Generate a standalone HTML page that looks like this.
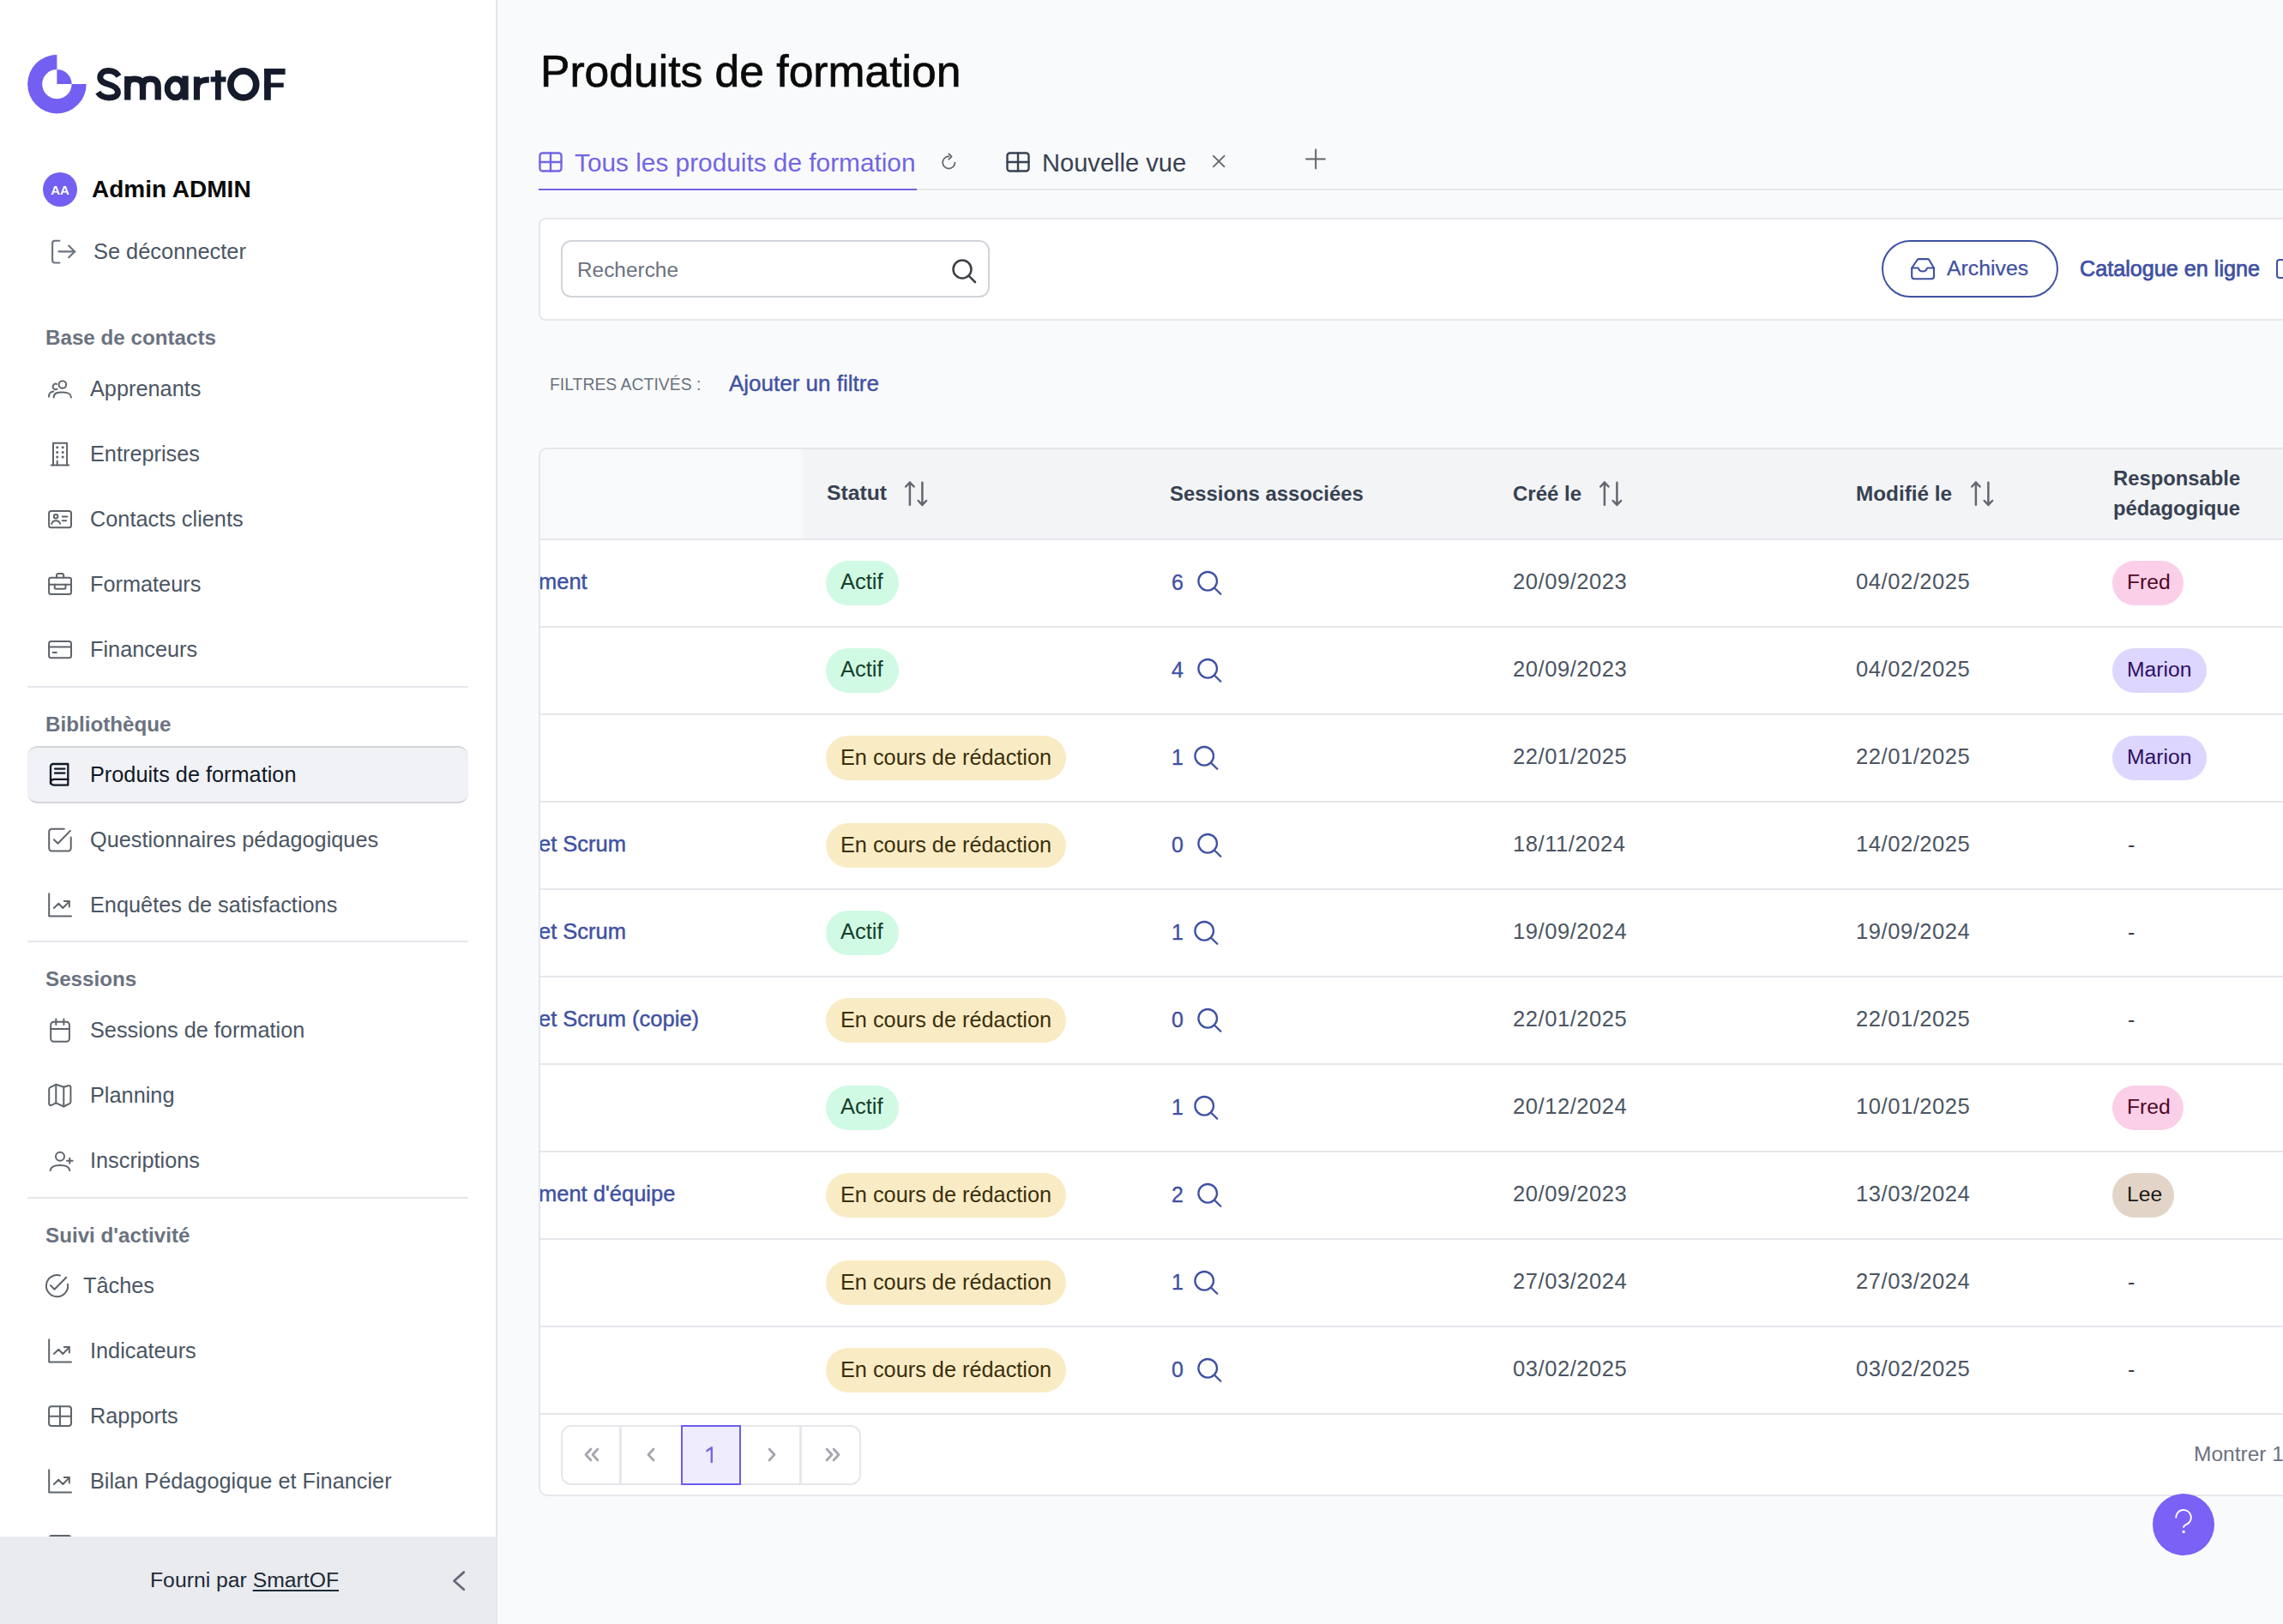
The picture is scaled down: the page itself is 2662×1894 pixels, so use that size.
<!DOCTYPE html>
<html><head><meta charset="utf-8"><title>Produits de formation</title>
<style>
html,body{margin:0;padding:0;}
body{width:2662px;height:1894px;position:relative;overflow:hidden;background:#f9fafb;font-family:"Liberation Sans",sans-serif;}
.t{position:absolute;white-space:nowrap;line-height:1;}
.r{position:absolute;}
svg.r{overflow:visible;}
</style></head><body>
<div class="r" style="left:0px;top:0px;width:578px;height:1894px;background:#fff;"></div>
<div class="r" style="left:578px;top:0px;width:2px;height:1894px;background:#e5e7eb;"></div>
<svg class="r" style="left:32px;top:64px;" width="69" height="69" viewBox="0 0 69 69" fill="#7360f2" stroke="none" stroke-width="0" stroke-linecap="round" stroke-linejoin="round"><path d="M34.4,-0.19999999999999574 A34.3,34.3 0 1 0 68.69999999999999,34.1 L51.599999999999994,34.1 A17.2,17.2 0 1 1 34.4,16.900000000000002 Z" /><path d="M34.4,34.1 L34.4,16.900000000000002 A17.2,17.2 0 0 1 51.599999999999994,34.1 Z" /></svg>
<svg class="r" style="left:0;top:0" width="580" height="160" viewBox="0 0 580 160"><g fill="none" stroke="#151b2b" stroke-linecap="butt"><path stroke-width="7" d="M138.6,88.8 C136,84.8 132,82.5 126.5,82.5 C120,82.5 116.8,86 116.8,90.3 C116.8,95 121,96.8 127,98.5 C133.5,100.3 137.4,102.5 137.4,107.8 C137.4,112 133,113.9 126.8,113.9 C121,113.9 116.8,111.5 114.2,107.6" /><path stroke-width="7.3" d="M148.75,116.6 V89" /><path stroke-width="7.3" d="M148.75,101 C148.75,94.5 151.5,92.2 156.5,92.2 C162.5,92.2 166.5,94.5 166.5,101.5 V116.6" /><path stroke-width="7.3" d="M166.5,101.5 C166.5,94.5 170,92.2 175,92.2 C181,92.2 184.2,94.5 184.2,101.5 V116.6" /><ellipse stroke-width="7" cx="204.6" cy="102.9" rx="9.4" ry="10.9" /><path stroke-width="7.3" d="M216,88.5 V116.6" /><path stroke-width="7.1" d="M229.45,116.6 V89.5" /><path stroke-width="6.8" d="M229.45,104 C229.6,96 234,93 243.8,93" /><path stroke-width="6.8" d="M254.3,82.1 V116.6" /><path stroke-width="6.1" d="M245.6,92.55 H263.5" /><ellipse stroke-width="7.7" cx="283.8" cy="98.45" rx="14.9" ry="15.5" /></g><g fill="#151b2b"><rect x="308.1" y="80" width="7.7" height="36.8"/><rect x="308.1" y="80" width="24.5" height="6.9"/><rect x="308.1" y="96.6" width="22.6" height="5.3"/></g></svg>
<div class="r" style="left:50px;top:201px;width:40px;height:40px;background:#7360f2;border-radius:50%;"></div>
<div class="t" style="left:50px;top:214.30px;font-size:15px;color:#fff;font-weight:700;width:40px;text-align:center;">AA</div>
<div class="t" style="left:107px;top:207.30px;font-size:28px;color:#0a0a0a;font-weight:700;">Admin ADMIN</div>
<svg class="r" style="left:50px;top:270px;" width="50" height="50" viewBox="0 0 50 50" fill="none" stroke="#6b7280" stroke-width="2.1" stroke-linecap="round" stroke-linejoin="round"><path d="M19.4,10.8 H14.1 a3,3 0 0 0 -3,3 V33.5 a3,3 0 0 0 3,3 H19.4" /><path d="M18.5,23.4 H37.3" /><path d="M30.2,16.6 L37,23.4 L30.2,30.2" /></svg>
<div class="t" style="left:109px;top:280.50px;font-size:25.4px;color:#4b5563;">Se déconnecter</div>
<div class="t" style="left:53px;top:381.51px;font-size:24.2px;color:#6b7280;font-weight:700;">Base de contacts</div>
<div class="t" style="left:105px;top:440.58px;font-size:25.3px;color:#4b5563;">Apprenants</div>
<div class="t" style="left:105px;top:516.58px;font-size:25.3px;color:#4b5563;">Entreprises</div>
<div class="t" style="left:105px;top:592.58px;font-size:25.3px;color:#4b5563;">Contacts clients</div>
<div class="t" style="left:105px;top:668.58px;font-size:25.3px;color:#4b5563;">Formateurs</div>
<div class="t" style="left:105px;top:744.58px;font-size:25.3px;color:#4b5563;">Financeurs</div>
<div class="r" style="left:32px;top:800px;width:514px;height:2px;background:#e5e7eb;"></div>
<div class="t" style="left:53px;top:832.51px;font-size:24.2px;color:#6b7280;font-weight:700;">Bibliothèque</div>
<div class="r" style="left:32px;top:870px;width:514px;height:67px;background:#f1f2f6;border-radius:12px;border-top:2px solid #d4d6db;border-bottom:2px solid #d4d6db;box-sizing:border-box;"></div>
<div class="t" style="left:105px;top:890.58px;font-size:25.3px;color:#111827;">Produits de formation</div>
<div class="t" style="left:105px;top:966.58px;font-size:25.3px;color:#4b5563;">Questionnaires pédagogiques</div>
<div class="t" style="left:105px;top:1042.58px;font-size:25.3px;color:#4b5563;">Enquêtes de satisfactions</div>
<div class="r" style="left:32px;top:1097px;width:514px;height:2px;background:#e5e7eb;"></div>
<div class="t" style="left:53px;top:1129.51px;font-size:24.2px;color:#6b7280;font-weight:700;">Sessions</div>
<div class="t" style="left:105px;top:1188.58px;font-size:25.3px;color:#4b5563;">Sessions de formation</div>
<div class="t" style="left:105px;top:1264.58px;font-size:25.3px;color:#4b5563;">Planning</div>
<div class="t" style="left:105px;top:1340.58px;font-size:25.3px;color:#4b5563;">Inscriptions</div>
<div class="r" style="left:32px;top:1396px;width:514px;height:2px;background:#e5e7eb;"></div>
<div class="t" style="left:53px;top:1428.51px;font-size:24.2px;color:#6b7280;font-weight:700;">Suivi d'activité</div>
<div class="t" style="left:97px;top:1486.58px;font-size:25.3px;color:#4b5563;">Tâches</div>
<div class="t" style="left:105px;top:1562.58px;font-size:25.3px;color:#4b5563;">Indicateurs</div>
<div class="t" style="left:105px;top:1638.58px;font-size:25.3px;color:#4b5563;">Rapports</div>
<div class="t" style="left:105px;top:1714.58px;font-size:25.3px;color:#4b5563;">Bilan Pédagogique et Financier</div>
<div class="t" style="left:105px;top:1790.58px;font-size:25.3px;color:#4b5563;">Documents</div>
<svg class="r" style="left:48px;top:436px;" width="44" height="44" viewBox="0 0 44 44" fill="none" stroke="#5f646b" stroke-width="2" stroke-linecap="round" stroke-linejoin="round"><circle cx="24.9" cy="12.5" r="4.3" /><path d="M18.2,11.9 A3.3,3.3 0 1 0 18.6,17.7" /><path d="M14.6,27.5 C15,22.3 18.5,21.4 24.6,21.4 C30.5,21.4 34.6,22.3 35,27.5" /><path d="M9,26.6 C9.3,22.3 10.8,21 14.3,20.6" /></svg>
<svg class="r" style="left:48px;top:508px;" width="44" height="44" viewBox="0 0 44 44" fill="none" stroke="#5f646b" stroke-width="2" stroke-linecap="round" stroke-linejoin="round"><path d="M14,34.5 V8.8 H30.1 V34.5" /><path d="M11.7,34.5 H32.2" /><path d="M18.7,29.7 V34.5" /><g fill="#5f646b" stroke="none"><circle cx="18.7" cy="13.7" r="1.5"/><circle cx="25.2" cy="13.7" r="1.5"/><circle cx="18.7" cy="19.4" r="1.5"/><circle cx="25.2" cy="19.4" r="1.5"/><circle cx="18.7" cy="24.9" r="1.5"/><circle cx="25.2" cy="24.9" r="1.5"/></g></svg>
<svg class="r" style="left:48px;top:584px;" width="44" height="44" viewBox="0 0 44 44" fill="none" stroke="#5f646b" stroke-width="2" stroke-linecap="round" stroke-linejoin="round"><rect x="9.1" y="11.9" width="25.9" height="19.3" rx="2.5" /><circle cx="17.1" cy="18.2" r="2.3" /><path d="M12.2,27 C13,24.3 15,23.3 17.2,23.3 C19.4,23.3 21.4,24.3 22.1,26.8" /><path d="M24.8,18.4 H30.4 M24.8,23.3 H29.1" /></svg>
<svg class="r" style="left:48px;top:660px;" width="44" height="44" viewBox="0 0 44 44" fill="none" stroke="#5f646b" stroke-width="2" stroke-linecap="round" stroke-linejoin="round"><rect x="9.1" y="13.8" width="25.9" height="19.1" rx="2.2" /><path d="M18,13.8 V10.9 a2,2 0 0 1 2,-2 H24.2 a2,2 0 0 1 2,2 V13.8" /><path d="M9.1,21.7 H35" /><path d="M15.7,21.7 V25.2 a1.5,1.5 0 0 0 1.5,1.5 H27 a1.5,1.5 0 0 0 1.5,-1.5 V21.7" /></svg>
<svg class="r" style="left:48px;top:736px;" width="44" height="44" viewBox="0 0 44 44" fill="none" stroke="#5f646b" stroke-width="2" stroke-linecap="round" stroke-linejoin="round"><rect x="9.1" y="11.9" width="25.9" height="19.3" rx="2.5" /><path d="M9.1,18.4 H35" /><path d="M13.7,24.9 H17.8" /></svg>
<svg class="r" style="left:48px;top:964px;" width="44" height="44" viewBox="0 0 44 44" fill="none" stroke="#5f646b" stroke-width="2" stroke-linecap="round" stroke-linejoin="round"><path d="M26.8,2.8 H12.4 a3.2,3.2 0 0 0 -3.2,3.2 V25.3 a3.2,3.2 0 0 0 3.2,3.2 H31.5 a3.2,3.2 0 0 0 3.2,-3.2 V12.5" /><path d="M14.9,15.2 L19.5,19.8 L33.9,4.9" /></svg>
<svg class="r" style="left:48px;top:1040px;" width="44" height="44" viewBox="0 0 44 44" fill="none" stroke="#5f646b" stroke-width="2" stroke-linecap="round" stroke-linejoin="round"><path d="M9.2,2.3 V28.5 H35" /><path d="M14.9,19 L20.3,13.8 L25.3,19 L32.8,11.4" /><path d="M26.8,11.1 H32.8 V17.6" /></svg>
<svg class="r" style="left:48px;top:1186px;" width="44" height="44" viewBox="0 0 44 44" fill="none" stroke="#5f646b" stroke-width="2" stroke-linecap="round" stroke-linejoin="round"><rect x="11.2" y="5.8" width="21.7" height="22.9" rx="3.5" /><path d="M11.2,14 H32.9" /><path d="M17.3,2.6 V8.9 M26.4,2.6 V8.9" /></svg>
<svg class="r" style="left:48px;top:1262px;" width="44" height="44" viewBox="0 0 44 44" fill="none" stroke="#5f646b" stroke-width="2" stroke-linecap="round" stroke-linejoin="round"><path d="M17.3,2.8 L10.6,6.2 a2.5,2.5 0 0 0 -1.4,2.2 V25.1 a2,2 0 0 0 2.9,1.8 L17.3,24.4 L26.3,28.5 L33,25.1 a2.5,2.5 0 0 0 1.4,-2.2 V6 a2,2 0 0 0 -2.9,-1.8 L26.3,5.8 Z" /><path d="M17.3,2.8 V24.4 M26.3,5.8 V28.5" /></svg>
<svg class="r" style="left:48px;top:1338px;" width="44" height="44" viewBox="0 0 44 44" fill="none" stroke="#5f646b" stroke-width="2" stroke-linecap="round" stroke-linejoin="round"><circle cx="22" cy="10.8" r="5" /><path d="M10.6,27.1 C11.2,22.5 14.5,20.9 22,20.9 C29.5,20.9 32.8,22.5 33.3,27.1" /><path d="M33.3,12.7 V18.7 M30,15.7 H36.6" /></svg>
<svg class="r" style="left:48px;top:1560px;" width="44" height="44" viewBox="0 0 44 44" fill="none" stroke="#5f646b" stroke-width="2" stroke-linecap="round" stroke-linejoin="round"><path d="M9.2,2.3 V28.5 H35" /><path d="M14.9,19 L20.3,13.8 L25.3,19 L32.8,11.4" /><path d="M26.8,11.1 H32.8 V17.6" /></svg>
<svg class="r" style="left:48px;top:1630px;" width="44" height="44" viewBox="0 0 44 44" fill="none" stroke="#5f646b" stroke-width="2" stroke-linecap="round" stroke-linejoin="round"><rect x="9.1" y="10.3" width="25.9" height="22.6" rx="3" /><path d="M22,10.3 V32.9 M9.1,21.7 H35" /></svg>
<svg class="r" style="left:48px;top:1712px;" width="44" height="44" viewBox="0 0 44 44" fill="none" stroke="#5f646b" stroke-width="2" stroke-linecap="round" stroke-linejoin="round"><path d="M9.2,2.3 V28.5 H35" /><path d="M14.9,19 L20.3,13.8 L25.3,19 L32.8,11.4" /><path d="M26.8,11.1 H32.8 V17.6" /></svg>
<svg class="r" style="left:44px;top:1478px;" width="44" height="44" viewBox="0 0 44 44" fill="none" stroke="#5f646b" stroke-width="2" stroke-linecap="round" stroke-linejoin="round"><path d="M26,9.5 A12.6,12.6 0 1 0 35,19.8" /><path d="M14.9,21.1 L19.5,25.7 L33.3,11.7" /></svg>
<svg class="r" style="left:56px;top:889px;" width="27" height="30" viewBox="0 0 27 30" fill="none" stroke="#111827" stroke-width="2.3" stroke-linecap="round" stroke-linejoin="round"><path d="M3,25 V5 a3,3 0 0 1 3,-3 H23.3 V26.6 H7 a4,4 0 0 1 -4,-4" /><path d="M3,23.5 a3.8,3.8 0 0 1 3.8,-3.6 H23.3" /><path d="M8,7.6 H19.4 M8,12.7 H19.4" /></svg>
<div class="r" style="left:57px;top:1790px;width:26px;height:3px;border-top:2px solid #5f646b;border-radius:3px 3px 0 0;box-sizing:border-box;"></div>
<div class="r" style="left:0px;top:1792px;width:578px;height:102px;background:#e9ebef;"></div>
<div class="t" style="left:175px;top:1831.05px;font-size:24.75px;color:#1f2937;">Fourni par <span style="text-decoration:underline;text-underline-offset:3px;text-decoration-thickness:2px">SmartOF</span></div>
<svg class="r" style="left:520px;top:1825px;" width="30" height="38" viewBox="0 0 30 38" fill="none" stroke="#646a75" stroke-width="2.8" stroke-linecap="round" stroke-linejoin="round"><path d="M20.8,8.6 L9.5,18.7 L20.8,28.8" /></svg>
<div class="r" style="left:580px;top:0px;width:2082px;height:1894px;background:#f9fafb;"></div>
<div class="t" style="left:630px;top:57.82px;font-size:51.6px;color:#0a0a0a;-webkit-text-stroke:0.7px #0a0a0a;">Produits de formation</div>
<svg class="r" style="left:628px;top:177px;" width="28" height="24" viewBox="0 0 28 24" fill="none" stroke="#7265e3" stroke-width="2.4" stroke-linecap="round" stroke-linejoin="round"><rect x="1.5" y="1.5" width="25" height="21" rx="3" /><path d="M1.5,12 H26.5" /><path d="M14,1.5 V22.5" /></svg>
<div class="t" style="left:670px;top:175.37px;font-size:29.8px;color:#7265e3;">Tous les produits de formation</div>
<div class="r" style="left:628px;top:220px;width:2034px;height:2px;background:#e5e7eb;"></div>
<div class="r" style="left:628px;top:220px;width:441px;height:2px;background:#7265e3;"></div>
<svg class="r" style="left:1090px;top:170px;" width="34" height="34" viewBox="0 0 34 34" fill="none" stroke="#5f646b" stroke-width="1.7" stroke-linecap="round" stroke-linejoin="round"><path d="M23.4,19.5 A7.1,7.1 0 1 1 16.3,12.4" /><path d="M16.3,9.3 L19.6,12.6 L16.3,15.9" /></svg>
<svg class="r" style="left:1173px;top:177px;" width="28" height="24" viewBox="0 0 28 24" fill="none" stroke="#374151" stroke-width="2.4" stroke-linecap="round" stroke-linejoin="round"><rect x="1.5" y="1.5" width="25" height="21" rx="3" /><path d="M1.5,12 H26.5" /><path d="M14,1.5 V22.5" /></svg>
<div class="t" style="left:1215px;top:175.97px;font-size:29.1px;color:#374151;">Nouvelle vue</div>
<svg class="r" style="left:1410px;top:178px;" width="22" height="22" viewBox="0 0 22 22" fill="none" stroke="#5f646b" stroke-width="1.8" stroke-linecap="round" stroke-linejoin="round"><path d="M4.9,3.8 L17.5,16.4 M17.5,3.8 L4.9,16.4" /></svg>
<svg class="r" style="left:1520px;top:172px;" width="28" height="28" viewBox="0 0 28 28" fill="none" stroke="#5f646b" stroke-width="2" stroke-linecap="round" stroke-linejoin="round"><path d="M14.2,2.4 V24.4 M3.1,13.5 H24.8" /></svg>
<div class="r" style="left:628px;top:254px;width:2100px;height:120px;background:#fff;border:2px solid #e5e7eb;border-radius:8px;box-sizing:border-box;"></div>
<div class="r" style="left:654px;top:280px;width:500px;height:67px;background:#fff;border:2px solid #d1d5db;border-radius:12px;box-sizing:border-box;"></div>
<div class="t" style="left:673px;top:302.75px;font-size:24.4px;color:#6b7280;">Recherche</div>
<svg class="r" style="left:1108px;top:300px;" width="32" height="32" viewBox="0 0 32 32" fill="none" stroke="#3b3f46" stroke-width="2.5" stroke-linecap="round" stroke-linejoin="round"><circle cx="14" cy="14" r="10.5" /><path d="M21.6,21.6 L29,29" /></svg>
<div class="r" style="left:2194px;top:280px;width:206px;height:67px;border:2px solid #3f51a2;border-radius:34px;box-sizing:border-box;"></div>
<svg class="r" style="left:2220px;top:290px;" width="44" height="44" viewBox="0 0 44 44" fill="none" stroke="#3f51a2" stroke-width="2.1" stroke-linecap="round" stroke-linejoin="round"><path d="M9.2,22.5 V32.2 a3,3 0 0 0 3,3 H32 a3,3 0 0 0 3,-3 V22.5 L29.3,13 a2,2 0 0 0 -1.7,-0.9 H17.4 a2,2 0 0 0 -1.7,0.9 Z" /><path d="M9.2,22.5 H16.2 q0.6,0 0.8,0.7 a5.1,4.6 0 0 0 9.8,0 q0.2,-0.7 0.8,-0.7 H35" /></svg>
<div class="t" style="left:2270px;top:301.01px;font-size:24.8px;color:#3f51a2;-webkit-text-stroke:0.25px #3f51a2;">Archives</div>
<div class="t" style="left:2425px;top:300.67px;font-size:25.2px;color:#3f51a2;-webkit-text-stroke:0.75px #3f51a2;">Catalogue en ligne</div>
<div class="r" style="left:2654px;top:302px;width:14px;height:23px;border:2px solid #3f51a2;border-radius:4px;box-sizing:border-box;"></div>
<div class="t" style="left:641px;top:438.58px;font-size:19.4px;color:#6b7280;">FILTRES ACTIVÉS :</div>
<div class="t" style="left:850px;top:433.99px;font-size:26px;color:#3f51a2;-webkit-text-stroke:0.4px #3f51a2;">Ajouter un filtre</div>
<div class="r" style="left:628px;top:522px;width:2100px;height:1223px;background:#fff;border:2px solid #e5e7eb;border-radius:10px;box-sizing:border-box;overflow:hidden;"></div>
<div class="r" style="left:630px;top:524px;width:2032px;height:105px;background:#f3f4f6;border-radius:8px 0 0 0;"></div>
<div class="r" style="left:630px;top:524px;width:306px;height:105px;background:#f8f9fb;border-radius:8px 0 0 0;"></div>
<div class="r" style="left:630px;top:628px;width:2032px;height:2px;background:#e5e7eb;"></div>
<div class="t" style="left:964px;top:563.39px;font-size:24.7px;color:#374151;font-weight:700;">Statut</div>
<svg class="r" style="left:1055px;top:561px;" width="27" height="29" viewBox="0 0 27 29" fill="none" stroke="#63676f" stroke-width="2.5" stroke-linecap="round" stroke-linejoin="round"><path d="M5.9,27.8 V1.6 M1.2,6.5 L5.9,1.6 L10.6,6.5" /><path d="M20.4,1.7 V27.9 M15.7,23 L20.4,27.9 L25.1,23" /></svg>
<div class="t" style="left:1364px;top:564.07px;font-size:23.9px;color:#374151;font-weight:700;">Sessions associées</div>
<div class="t" style="left:1764px;top:563.98px;font-size:24px;color:#374151;font-weight:700;">Créé le</div>
<svg class="r" style="left:1865px;top:561px;" width="27" height="29" viewBox="0 0 27 29" fill="none" stroke="#63676f" stroke-width="2.5" stroke-linecap="round" stroke-linejoin="round"><path d="M5.9,27.8 V1.6 M1.2,6.5 L5.9,1.6 L10.6,6.5" /><path d="M20.4,1.7 V27.9 M15.7,23 L20.4,27.9 L25.1,23" /></svg>
<div class="t" style="left:2164px;top:563.73px;font-size:24.3px;color:#374151;font-weight:700;">Modifié le</div>
<svg class="r" style="left:2298px;top:561px;" width="27" height="29" viewBox="0 0 27 29" fill="none" stroke="#63676f" stroke-width="2.5" stroke-linecap="round" stroke-linejoin="round"><path d="M5.9,27.8 V1.6 M1.2,6.5 L5.9,1.6 L10.6,6.5" /><path d="M20.4,1.7 V27.9 M15.7,23 L20.4,27.9 L25.1,23" /></svg>
<div class="t" style="left:2464px;top:545.55px;font-size:23.8px;color:#374151;font-weight:700;">Responsable</div>
<div class="t" style="left:2464px;top:581.05px;font-size:23.8px;color:#374151;font-weight:700;">pédagogique</div>
<div class="r" style="left:630px;top:730px;width:2032px;height:2px;background:#e5e7eb;"></div>
<div class="r" style="left:630px;top:629px;width:300px;height:100px;overflow:hidden;"><div class="t" style="left:-2px;top:37.41px;font-size:25.5px;color:#3f51a2;-webkit-text-stroke:0.45px #3f51a2;">ment</div>
</div>
<div class="r" style="left:963px;top:654px;width:85px;height:52px;background:#d1fae5;border-radius:26px;"></div>
<div class="t" style="left:980px;top:666.41px;font-size:25.5px;color:#15402a;">Actif</div>
<div class="t" style="left:1366px;top:666.84px;font-size:25px;color:#3f51a2;-webkit-text-stroke:0.35px #3f51a2;">6</div>
<svg class="r" style="left:1396px;top:665px;" width="30" height="30" viewBox="0 0 30 30" fill="none" stroke="#3f51a2" stroke-width="2.3" stroke-linecap="round" stroke-linejoin="round"><circle cx="12.2" cy="12.8" r="10.8" /><path d="M19.9,20.5 L27.3,27.8" /></svg>
<div class="t" style="left:1764px;top:666.33px;font-size:25.6px;color:#4b5563;letter-spacing:0.52px;">20/09/2023</div>
<div class="t" style="left:2164px;top:666.33px;font-size:25.6px;color:#4b5563;letter-spacing:0.52px;">04/02/2025</div>
<div class="r" style="left:2463px;top:654px;width:83px;height:52px;background:#fbcfe8;border-radius:26px;"></div>
<div class="t" style="left:2480px;top:667.09px;font-size:24.7px;color:#500724;">Fred</div>
<div class="r" style="left:630px;top:832px;width:2032px;height:2px;background:#e5e7eb;"></div>
<div class="r" style="left:963px;top:756px;width:85px;height:52px;background:#d1fae5;border-radius:26px;"></div>
<div class="t" style="left:980px;top:768.41px;font-size:25.5px;color:#15402a;">Actif</div>
<div class="t" style="left:1366px;top:768.84px;font-size:25px;color:#3f51a2;-webkit-text-stroke:0.35px #3f51a2;">4</div>
<svg class="r" style="left:1396px;top:767px;" width="30" height="30" viewBox="0 0 30 30" fill="none" stroke="#3f51a2" stroke-width="2.3" stroke-linecap="round" stroke-linejoin="round"><circle cx="12.2" cy="12.8" r="10.8" /><path d="M19.9,20.5 L27.3,27.8" /></svg>
<div class="t" style="left:1764px;top:768.33px;font-size:25.6px;color:#4b5563;letter-spacing:0.52px;">20/09/2023</div>
<div class="t" style="left:2164px;top:768.33px;font-size:25.6px;color:#4b5563;letter-spacing:0.52px;">04/02/2025</div>
<div class="r" style="left:2463px;top:756px;width:110px;height:52px;background:#ddd6fe;border-radius:26px;"></div>
<div class="t" style="left:2480px;top:769.09px;font-size:24.7px;color:#2e1065;">Marion</div>
<div class="r" style="left:630px;top:934px;width:2032px;height:2px;background:#e5e7eb;"></div>
<div class="r" style="left:963px;top:858px;width:280px;height:52px;background:#f9ecc5;border-radius:26px;"></div>
<div class="t" style="left:980px;top:870.58px;font-size:25.3px;color:#3b2f0c;">En cours de rédaction</div>
<div class="t" style="left:1366px;top:870.84px;font-size:25px;color:#3f51a2;-webkit-text-stroke:0.35px #3f51a2;">1</div>
<svg class="r" style="left:1392px;top:869px;" width="30" height="30" viewBox="0 0 30 30" fill="none" stroke="#3f51a2" stroke-width="2.3" stroke-linecap="round" stroke-linejoin="round"><circle cx="12.2" cy="12.8" r="10.8" /><path d="M19.9,20.5 L27.3,27.8" /></svg>
<div class="t" style="left:1764px;top:870.33px;font-size:25.6px;color:#4b5563;letter-spacing:0.52px;">22/01/2025</div>
<div class="t" style="left:2164px;top:870.33px;font-size:25.6px;color:#4b5563;letter-spacing:0.52px;">22/01/2025</div>
<div class="r" style="left:2463px;top:858px;width:110px;height:52px;background:#ddd6fe;border-radius:26px;"></div>
<div class="t" style="left:2480px;top:871.09px;font-size:24.7px;color:#2e1065;">Marion</div>
<div class="r" style="left:630px;top:1036px;width:2032px;height:2px;background:#e5e7eb;"></div>
<div class="r" style="left:630px;top:935px;width:300px;height:100px;overflow:hidden;"><div class="t" style="left:-2px;top:37.41px;font-size:25.5px;color:#3f51a2;-webkit-text-stroke:0.45px #3f51a2;">et Scrum</div>
</div>
<div class="r" style="left:963px;top:960px;width:280px;height:52px;background:#f9ecc5;border-radius:26px;"></div>
<div class="t" style="left:980px;top:972.58px;font-size:25.3px;color:#3b2f0c;">En cours de rédaction</div>
<div class="t" style="left:1366px;top:972.84px;font-size:25px;color:#3f51a2;-webkit-text-stroke:0.35px #3f51a2;">0</div>
<svg class="r" style="left:1396px;top:971px;" width="30" height="30" viewBox="0 0 30 30" fill="none" stroke="#3f51a2" stroke-width="2.3" stroke-linecap="round" stroke-linejoin="round"><circle cx="12.2" cy="12.8" r="10.8" /><path d="M19.9,20.5 L27.3,27.8" /></svg>
<div class="t" style="left:1764px;top:972.33px;font-size:25.6px;color:#4b5563;letter-spacing:0.52px;">18/11/2024</div>
<div class="t" style="left:2164px;top:972.33px;font-size:25.6px;color:#4b5563;letter-spacing:0.52px;">14/02/2025</div>
<div class="t" style="left:2481px;top:972.84px;font-size:25px;color:#374151;">-</div>
<div class="r" style="left:630px;top:1138px;width:2032px;height:2px;background:#e5e7eb;"></div>
<div class="r" style="left:630px;top:1037px;width:300px;height:100px;overflow:hidden;"><div class="t" style="left:-2px;top:37.41px;font-size:25.5px;color:#3f51a2;-webkit-text-stroke:0.45px #3f51a2;">et Scrum</div>
</div>
<div class="r" style="left:963px;top:1062px;width:85px;height:52px;background:#d1fae5;border-radius:26px;"></div>
<div class="t" style="left:980px;top:1074.41px;font-size:25.5px;color:#15402a;">Actif</div>
<div class="t" style="left:1366px;top:1074.84px;font-size:25px;color:#3f51a2;-webkit-text-stroke:0.35px #3f51a2;">1</div>
<svg class="r" style="left:1392px;top:1073px;" width="30" height="30" viewBox="0 0 30 30" fill="none" stroke="#3f51a2" stroke-width="2.3" stroke-linecap="round" stroke-linejoin="round"><circle cx="12.2" cy="12.8" r="10.8" /><path d="M19.9,20.5 L27.3,27.8" /></svg>
<div class="t" style="left:1764px;top:1074.33px;font-size:25.6px;color:#4b5563;letter-spacing:0.52px;">19/09/2024</div>
<div class="t" style="left:2164px;top:1074.33px;font-size:25.6px;color:#4b5563;letter-spacing:0.52px;">19/09/2024</div>
<div class="t" style="left:2481px;top:1074.84px;font-size:25px;color:#374151;">-</div>
<div class="r" style="left:630px;top:1240px;width:2032px;height:2px;background:#e5e7eb;"></div>
<div class="r" style="left:630px;top:1139px;width:300px;height:100px;overflow:hidden;"><div class="t" style="left:-2px;top:37.41px;font-size:25.5px;color:#3f51a2;-webkit-text-stroke:0.45px #3f51a2;">et Scrum (copie)</div>
</div>
<div class="r" style="left:963px;top:1164px;width:280px;height:52px;background:#f9ecc5;border-radius:26px;"></div>
<div class="t" style="left:980px;top:1176.58px;font-size:25.3px;color:#3b2f0c;">En cours de rédaction</div>
<div class="t" style="left:1366px;top:1176.84px;font-size:25px;color:#3f51a2;-webkit-text-stroke:0.35px #3f51a2;">0</div>
<svg class="r" style="left:1396px;top:1175px;" width="30" height="30" viewBox="0 0 30 30" fill="none" stroke="#3f51a2" stroke-width="2.3" stroke-linecap="round" stroke-linejoin="round"><circle cx="12.2" cy="12.8" r="10.8" /><path d="M19.9,20.5 L27.3,27.8" /></svg>
<div class="t" style="left:1764px;top:1176.33px;font-size:25.6px;color:#4b5563;letter-spacing:0.52px;">22/01/2025</div>
<div class="t" style="left:2164px;top:1176.33px;font-size:25.6px;color:#4b5563;letter-spacing:0.52px;">22/01/2025</div>
<div class="t" style="left:2481px;top:1176.84px;font-size:25px;color:#374151;">-</div>
<div class="r" style="left:630px;top:1342px;width:2032px;height:2px;background:#e5e7eb;"></div>
<div class="r" style="left:963px;top:1266px;width:85px;height:52px;background:#d1fae5;border-radius:26px;"></div>
<div class="t" style="left:980px;top:1278.41px;font-size:25.5px;color:#15402a;">Actif</div>
<div class="t" style="left:1366px;top:1278.84px;font-size:25px;color:#3f51a2;-webkit-text-stroke:0.35px #3f51a2;">1</div>
<svg class="r" style="left:1392px;top:1277px;" width="30" height="30" viewBox="0 0 30 30" fill="none" stroke="#3f51a2" stroke-width="2.3" stroke-linecap="round" stroke-linejoin="round"><circle cx="12.2" cy="12.8" r="10.8" /><path d="M19.9,20.5 L27.3,27.8" /></svg>
<div class="t" style="left:1764px;top:1278.33px;font-size:25.6px;color:#4b5563;letter-spacing:0.52px;">20/12/2024</div>
<div class="t" style="left:2164px;top:1278.33px;font-size:25.6px;color:#4b5563;letter-spacing:0.52px;">10/01/2025</div>
<div class="r" style="left:2463px;top:1266px;width:83px;height:52px;background:#fbcfe8;border-radius:26px;"></div>
<div class="t" style="left:2480px;top:1279.09px;font-size:24.7px;color:#500724;">Fred</div>
<div class="r" style="left:630px;top:1444px;width:2032px;height:2px;background:#e5e7eb;"></div>
<div class="r" style="left:630px;top:1343px;width:300px;height:100px;overflow:hidden;"><div class="t" style="left:-2px;top:37.41px;font-size:25.5px;color:#3f51a2;-webkit-text-stroke:0.45px #3f51a2;">ment d'équipe</div>
</div>
<div class="r" style="left:963px;top:1368px;width:280px;height:52px;background:#f9ecc5;border-radius:26px;"></div>
<div class="t" style="left:980px;top:1380.58px;font-size:25.3px;color:#3b2f0c;">En cours de rédaction</div>
<div class="t" style="left:1366px;top:1380.84px;font-size:25px;color:#3f51a2;-webkit-text-stroke:0.35px #3f51a2;">2</div>
<svg class="r" style="left:1396px;top:1379px;" width="30" height="30" viewBox="0 0 30 30" fill="none" stroke="#3f51a2" stroke-width="2.3" stroke-linecap="round" stroke-linejoin="round"><circle cx="12.2" cy="12.8" r="10.8" /><path d="M19.9,20.5 L27.3,27.8" /></svg>
<div class="t" style="left:1764px;top:1380.33px;font-size:25.6px;color:#4b5563;letter-spacing:0.52px;">20/09/2023</div>
<div class="t" style="left:2164px;top:1380.33px;font-size:25.6px;color:#4b5563;letter-spacing:0.52px;">13/03/2024</div>
<div class="r" style="left:2463px;top:1368px;width:72px;height:52px;background:#e2d5c8;border-radius:26px;"></div>
<div class="t" style="left:2480px;top:1381.09px;font-size:24.7px;color:#1c1917;">Lee</div>
<div class="r" style="left:630px;top:1546px;width:2032px;height:2px;background:#e5e7eb;"></div>
<div class="r" style="left:963px;top:1470px;width:280px;height:52px;background:#f9ecc5;border-radius:26px;"></div>
<div class="t" style="left:980px;top:1482.58px;font-size:25.3px;color:#3b2f0c;">En cours de rédaction</div>
<div class="t" style="left:1366px;top:1482.84px;font-size:25px;color:#3f51a2;-webkit-text-stroke:0.35px #3f51a2;">1</div>
<svg class="r" style="left:1392px;top:1481px;" width="30" height="30" viewBox="0 0 30 30" fill="none" stroke="#3f51a2" stroke-width="2.3" stroke-linecap="round" stroke-linejoin="round"><circle cx="12.2" cy="12.8" r="10.8" /><path d="M19.9,20.5 L27.3,27.8" /></svg>
<div class="t" style="left:1764px;top:1482.33px;font-size:25.6px;color:#4b5563;letter-spacing:0.52px;">27/03/2024</div>
<div class="t" style="left:2164px;top:1482.33px;font-size:25.6px;color:#4b5563;letter-spacing:0.52px;">27/03/2024</div>
<div class="t" style="left:2481px;top:1482.84px;font-size:25px;color:#374151;">-</div>
<div class="r" style="left:630px;top:1648px;width:2032px;height:2px;background:#e5e7eb;"></div>
<div class="r" style="left:963px;top:1572px;width:280px;height:52px;background:#f9ecc5;border-radius:26px;"></div>
<div class="t" style="left:980px;top:1584.58px;font-size:25.3px;color:#3b2f0c;">En cours de rédaction</div>
<div class="t" style="left:1366px;top:1584.84px;font-size:25px;color:#3f51a2;-webkit-text-stroke:0.35px #3f51a2;">0</div>
<svg class="r" style="left:1396px;top:1583px;" width="30" height="30" viewBox="0 0 30 30" fill="none" stroke="#3f51a2" stroke-width="2.3" stroke-linecap="round" stroke-linejoin="round"><circle cx="12.2" cy="12.8" r="10.8" /><path d="M19.9,20.5 L27.3,27.8" /></svg>
<div class="t" style="left:1764px;top:1584.33px;font-size:25.6px;color:#4b5563;letter-spacing:0.52px;">03/02/2025</div>
<div class="t" style="left:2164px;top:1584.33px;font-size:25.6px;color:#4b5563;letter-spacing:0.52px;">03/02/2025</div>
<div class="t" style="left:2481px;top:1584.84px;font-size:25px;color:#374151;">-</div>
<div class="r" style="left:654px;top:1662px;width:350px;height:70px;border:2px solid #e5e7eb;border-radius:12px;box-sizing:border-box;"></div>
<div class="r" style="left:722px;top:1664px;width:3px;height:66px;background:#e5e7eb;"></div>
<div class="r" style="left:932px;top:1664px;width:3px;height:66px;background:#e5e7eb;"></div>
<div class="r" style="left:794px;top:1662px;width:70px;height:70px;background:#efedfc;border:2.5px solid #6a5cf0;box-sizing:border-box;"></div>
<svg class="r" style="left:794px;top:1662px;" width="70" height="70" viewBox="0 0 70 70" fill="none" stroke="#7565e8" stroke-width="2.4" stroke-linecap="round" stroke-linejoin="round"><path d="M30.4,30 L35.8,26.2 V43" /></svg>
<svg class="r" style="left:676px;top:1683px;" width="30" height="30" viewBox="0 0 30 30" fill="none" stroke="#a2a6ad" stroke-width="2.7" stroke-linecap="round" stroke-linejoin="round"><path d="M13,7 L7,13.5 L13,20 M21,7 L15,13.5 L21,20" /></svg>
<svg class="r" style="left:745px;top:1683px;" width="30" height="30" viewBox="0 0 30 30" fill="none" stroke="#a2a6ad" stroke-width="2.7" stroke-linecap="round" stroke-linejoin="round"><path d="M17,7 L11,13.5 L17,20" /></svg>
<svg class="r" style="left:885px;top:1683px;" width="30" height="30" viewBox="0 0 30 30" fill="none" stroke="#a2a6ad" stroke-width="2.7" stroke-linecap="round" stroke-linejoin="round"><path d="M12,7 L18,13.5 L12,20" /></svg>
<svg class="r" style="left:955px;top:1683px;" width="30" height="30" viewBox="0 0 30 30" fill="none" stroke="#a2a6ad" stroke-width="2.7" stroke-linecap="round" stroke-linejoin="round"><path d="M9,7 L15,13.5 L9,20 M17,7 L23,13.5 L17,20" /></svg>
<div class="t" style="left:2558px;top:1684.26px;font-size:24.5px;color:#6b7280;">Montrer 10</div>
<div class="r" style="left:2510px;top:1742px;width:72px;height:72px;background:#7b61f5;border-radius:50%;"></div>
<svg class="r" style="left:2520px;top:1750px;" width="52" height="52" viewBox="0 0 52 52" fill="none" stroke="#fff" stroke-width="1.9" stroke-linecap="round" stroke-linejoin="round"><path d="M17.2,19.8 a8.8,8.8 0 1 1 12.6,7.9 c-2.3,1.1 -3.7,2 -3.7,3.3" /><circle cx="26.1" cy="36.4" r="1.7" fill="#fff" stroke="none"/></svg>
</body></html>
